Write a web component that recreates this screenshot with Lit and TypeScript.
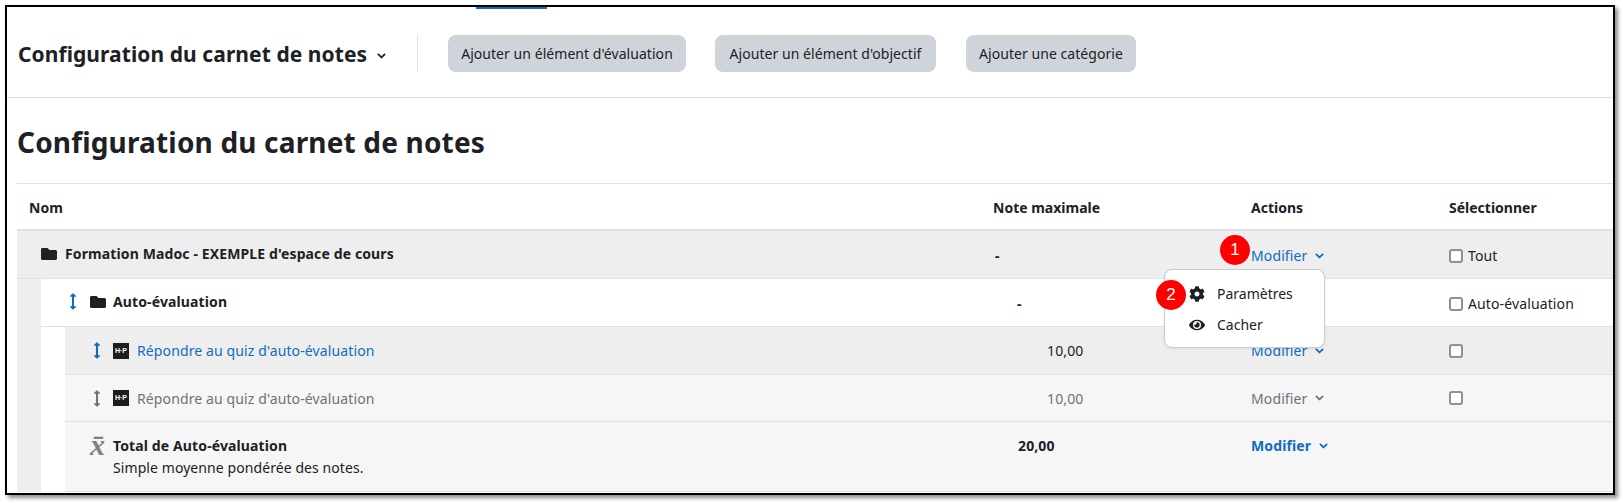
import { LitElement, html, css, svg } from "lit";
import { customElement } from "lit/decorators.js";

const folder = html`<svg class="folder" viewBox="0 0 512 512"><path fill="currentColor" d="M464 128H272l-64-64H48C21.49 64 0 85.49 0 112v288c0 26.51 21.49 48 48 48h416c26.51 0 48-21.49 48-48V176c0-26.51-21.49-48-48-48z"/></svg>`;
const move = () => html`<svg class="move" viewBox="0 0 8 18"><path fill="currentColor" d="M2.9 4H1.2c-.4 0-.6-.4-.4-.7L3.6.4c.2-.2.6-.2.8 0l2.8 2.9c.2.3 0 .7-.4.7H5.1v10h1.7c.4 0 .6.4.4.7l-2.8 2.9c-.2.2-.6.2-.8 0L.8 14.7c-.2-.3 0-.7.4-.7h1.7z"/></svg>`;
const chev = html`<svg class="chev" viewBox="0 0 10 6"><path fill="none" stroke="currentColor" stroke-width="2" stroke-linecap="round" stroke-linejoin="round" d="M1.5 1.2 5 4.6l3.5-3.4"/></svg>`;
const gear = svg`<path fill="currentColor" d="M487.4 315.7l-42.6-24.6c4.3-23.2 4.3-47 0-70.2l42.6-24.6c4.9-2.8 7.1-8.6 5.5-14-11.1-35.6-30-67.8-54.7-94.6-3.8-4.1-10-5.1-14.8-2.3L380.8 110c-17.9-15.4-38.5-27.3-60.8-35.1V25.8c0-5.6-3.9-10.5-9.4-11.7-36.7-8.2-74.3-7.8-109.2 0-5.5 1.2-9.4 6.1-9.4 11.7V75c-22.2 7.9-42.8 19.8-60.8 35.1L88.7 85.5c-4.9-2.8-11-1.9-14.8 2.3-24.7 26.7-43.6 58.9-54.7 94.6-1.7 5.4.6 11.2 5.5 14L67.3 221c-4.3 23.2-4.3 47 0 70.2l-42.6 24.6c-4.9 2.8-7.1 8.6-5.5 14 11.1 35.6 30 67.8 54.7 94.6 3.8 4.1 10 5.1 14.8 2.3l42.6-24.6c17.9 15.4 38.5 27.3 60.8 35.1v49.2c0 5.6 3.9 10.5 9.4 11.7 36.7 8.2 74.3 7.8 109.2 0 5.5-1.2 9.4-6.1 9.4-11.7v-49.2c22.2-7.9 42.8-19.8 60.8-35.1l42.6 24.6c4.9 2.8 11 1.9 14.8-2.3 24.7-26.7 43.6-58.9 54.7-94.6 1.5-5.5-.7-11.3-5.6-14.1zM256 336c-44.1 0-80-35.9-80-80s35.9-80 80-80 80 35.9 80 80-35.9 80-80 80z"/>`;
const eye = svg`<path fill="currentColor" d="M572.52 241.4C518.29 135.59 410.93 64 288 64S57.68 135.64 3.48 241.41a32.35 32.35 0 0 0 0 29.19C57.71 376.41 165.07 448 288 448s230.32-71.64 284.52-177.41a32.35 32.35 0 0 0 0-29.19zM288 400a144 144 0 1 1 144-144 143.93 143.93 0 0 1-144 144zm0-240a95.31 95.31 0 0 0-25.31 3.79 47.85 47.85 0 0 1-66.9 66.9A95.78 95.78 0 1 0 288 160z"/>`;

@customElement("app-root")
export class AppRoot extends LitElement {
  static styles = css`
    :host {
      display: block;
      width: 1623px;
      height: 504px;
      background: #fff;
      font-family: "Noto Sans", "Open Sans", sans-serif;
      font-size: 14px;
      letter-spacing: 0.12px;
      color: #1d2125;
      overflow: hidden;
    }
    .frame {
      position: relative;
      box-sizing: border-box;
      margin: 5px 0 0 5px;
      width: 1610px;
      height: 490px;
      border: 2px solid #000;
      box-shadow: 3px 3px 4px rgba(0, 0, 0, 0.45);
      overflow: hidden;
      background: #fff;
    }
    .tab {
      width: 71px;
      height: 2px;
      margin-left: 469px;
      background: #0f6cbf;
    }
    .nav {
      display: flex;
      align-items: center;
      height: 89px;
      padding-top: 1px;
      box-sizing: border-box;
      border-bottom: 1px solid #dee2e6;
      padding-left: 11px;
    }
    .nav-title {
      font-size: 21px;
      font-weight: 700;
      letter-spacing: 0.07px;
      display: flex;
      align-items: center;
      width: 400px;
      flex: none;
    }
    .nav-title .chev { width: 9px; height: 6px; margin-left: 10px; margin-top: 4px; color: #1d2125; }
    .nav-sep {
      width: 1px;
      height: 37px;
      background: #dee2e6;
      margin-right: 30px;
      margin-left: -1px;
    }
    .btn {
      height: 37px;
      border-radius: 8px;
      background: #ced4da;
      display: flex;
      align-items: center;
      justify-content: center;
      box-sizing: border-box;
      letter-spacing: 0.05px;
      margin-right: 29px;
    }
    .b1 { width: 238px; }
    .b2 { width: 221px; margin-right: 30px; }
    .b3 { width: 170px; }
    h1 {
      margin: 0;
      font-size: 28px;
      font-weight: 700;
      letter-spacing: 0.17px;
      line-height: 38px;
      padding: 25px 0 22px 10px;
    }
    .table { margin-left: 10px; background: #eeeeee; }
    .row {
      display: flex;
      align-items: center;
      box-sizing: border-box;
    }
    .name { flex: 1; min-width: 0; display: flex; align-items: center; }
    .val { flex: none; width: 258px; box-sizing: border-box; }
    .act { flex: none; width: 198px; display: flex; align-items: center; color: #0f6cbf; box-sizing: border-box; }
    .sel { flex: none; width: 164px; display: flex; align-items: center; box-sizing: border-box; }
    .head {
      height: 48px;
      background: #fff;
      border-top: 1px solid #dee2e6;
      border-bottom: 2px solid #dee2e6;
      font-weight: 700;
      letter-spacing: 0;
      padding-top: 2px;
    }
    .head .name { padding-left: 12px; }
    .head .act { color: inherit; }
    .r1 { height: 48px; background: #eeeeee; border-bottom: 1px solid #dee2e6; }
    .r1 .name { padding-left: 24px; padding-bottom: 2px; font-weight: 700; }
    .r1 .val { padding-left: 2px; }
    .r1 .val, .r1 .act, .r1 .sel, .r2 .val, .r2 .act, .r2 .sel { padding-top: 2px; }
    .bold { font-weight: 700; }
    .folder { width: 16px; height: 16px; flex: none; margin-right: 8px; }
    .l1 { margin-left: 24px; background: #fff; }
    .r2 { height: 48px; border-bottom: 1px solid #dee2e6; }
    .r2 .name { padding-left: 28px; padding-bottom: 2px; font-weight: 700; }
    .r2 .folder { margin-right: 7px; }
    .r2 .val { padding-left: 24px; }
    .move { width: 8px; height: 17px; flex: none; color: #0f6cbf; }
    .r2 .move { margin-right: 13px; }
    .l2 { margin-left: 24px; }
    .r3 { height: 48px; background: #eeeeee; border-bottom: 1px solid #dee2e6; }
    .r4 { height: 47px; background: #f6f6f6; border-bottom: 1px solid #dee2e6; color: #6a737b; }
    .r3 .name, .r4 .name { padding-left: 28px; }
    .r3 .move, .r4 .move { margin-right: 12px; }
    .r4 .move { color: #6a737b; }
    .hp {
      width: 16px;
      height: 16px;
      flex: none;
      background: #1d1d1d;
      color: #fff;
      font-size: 7px;
      font-weight: 700;
      letter-spacing: 0;
      line-height: 16px;
      text-align: center;
      margin-right: 8px;
      font-family: "Liberation Sans", sans-serif;
    }
    .link { color: #0f6cbf; }
    .r4 .link, .r4 .act { color: #6a737b; }
    .chev { width: 9px; height: 6px; margin-left: 8px; flex: none; }
    .r3 .val, .r4 .val { width: 230px; padding-left: 26px; }
    .r5 {
      height: 70px;
      background: #f6f6f6;
      align-items: flex-start;
      padding-top: 14px;
      border-bottom: 1px solid #dee2e6;
    }
    .r5 .name { padding-left: 25px; align-items: flex-start; }
    .xbar {
      font-family: "Liberation Serif", serif;
      font-style: italic;
      font-size: 30px;
      font-weight: 700;
      letter-spacing: 0;
      line-height: 18px;
      color: #808080;
      width: 23px;
      flex: none;
    }
    .tot { font-weight: 700; line-height: 20px; }
    .desc { line-height: 22px; margin-top: 1px; letter-spacing: 0.08px; }
    .r5 .val { font-weight: 700; line-height: 20px; padding-left: 25px; }
    .r5 .act { font-weight: 700; line-height: 20px; }
    .r5 .sel { height: 20px; }
    .cb {
      width: 14px;
      height: 14px;
      flex: none;
      box-sizing: border-box;
      border: 2px solid #8f8f9d;
      border-radius: 3px;
      background: #fff;
      margin-right: 5px;
    }
    .menu {
      position: absolute;
      left: 1157px;
      top: 262px;
      width: 161px;
      height: 79px;
      box-sizing: border-box;
      border: 1px solid #ccc;
      border-radius: 8px;
      background: #fff;
      display: flex;
      flex-direction: column;
      justify-content: center;
      gap: 8px;
      padding-top: 1px;
      letter-spacing: 0;
      box-shadow: 0 1px 3px rgba(0,0,0,.08);
    }
    .item { display: flex; align-items: center; height: 23px; padding-left: 24px; }
    .item svg { width: 16px; height: 16px; flex: none; margin-right: 12px; color: #1d2125; }
    .badge {
      position: absolute;
      width: 30px;
      height: 30px;
      border-radius: 50%;
      background: #f00;
      color: #fff;
      font-size: 17px;
      display: flex;
      align-items: center;
      justify-content: center;
      font-family: "Liberation Sans", sans-serif;
    }
    .bd1 { left: 1213px; top: 228px; }
    .bd2 { left: 1149px; top: 273px; }
  `;

  private modif() {
    return html`<span>Modifier</span>${chev}`;
  }

  render() {
    return html`
      <div class="frame">
        <div class="tab"></div>
        <div class="nav">
          <div class="nav-title">Configuration du carnet de notes ${chev}</div>
          <div class="nav-sep"></div>
          <div class="btn b1">Ajouter un élément d'évaluation</div>
          <div class="btn b2">Ajouter un élément d'objectif</div>
          <div class="btn b3">Ajouter une catégorie</div>
        </div>
        <h1>Configuration du carnet de notes</h1>
        <div class="table">
          <div class="row head">
            <div class="name">Nom</div>
            <div class="val">Note maximale</div>
            <div class="act">Actions</div>
            <div class="sel">Sélectionner</div>
          </div>
          <div class="row r1">
            <div class="name">${folder}Formation Madoc - EXEMPLE d'espace de cours</div>
            <div class="val bold">-</div>
            <div class="act">${this.modif()}</div>
            <div class="sel"><span class="cb"></span>Tout</div>
          </div>
          <div class="l1">
            <div class="row r2">
              <div class="name">${move()}${folder}Auto-évaluation</div>
              <div class="val bold">-</div>
              <div class="act">${this.modif()}</div>
              <div class="sel"><span class="cb"></span>Auto-évaluation</div>
            </div>
            <div class="l2">
              <div class="row r3">
                <div class="name">${move()}<span class="hp">H·P</span><span class="link">Répondre au quiz d'auto-évaluation</span></div>
                <div class="val">10,00</div>
                <div class="act">${this.modif()}</div>
                <div class="sel"><span class="cb"></span></div>
              </div>
              <div class="row r4">
                <div class="name">${move()}<span class="hp">H·P</span><span class="link">Répondre au quiz d'auto-évaluation</span></div>
                <div class="val">10,00</div>
                <div class="act">${this.modif()}</div>
                <div class="sel"><span class="cb"></span></div>
              </div>
              <div class="row r5">
                <div class="name">
                  <span class="xbar">x̄</span>
                  <div>
                    <div class="tot">Total de Auto-évaluation</div>
                    <div class="desc">Simple moyenne pondérée des notes.</div>
                  </div>
                </div>
                <div class="val">20,00</div>
                <div class="act">${this.modif()}</div>
                <div class="sel"></div>
              </div>
            </div>
          </div>
        </div>
        <div class="menu">
          <div class="item"><svg viewBox="0 0 512 512">${gear}</svg>Paramètres</div>
          <div class="item"><svg viewBox="0 0 576 512">${eye}</svg>Cacher</div>
        </div>
        <div class="badge bd1">1</div>
        <div class="badge bd2">2</div>
      </div>
    `;
  }
}
